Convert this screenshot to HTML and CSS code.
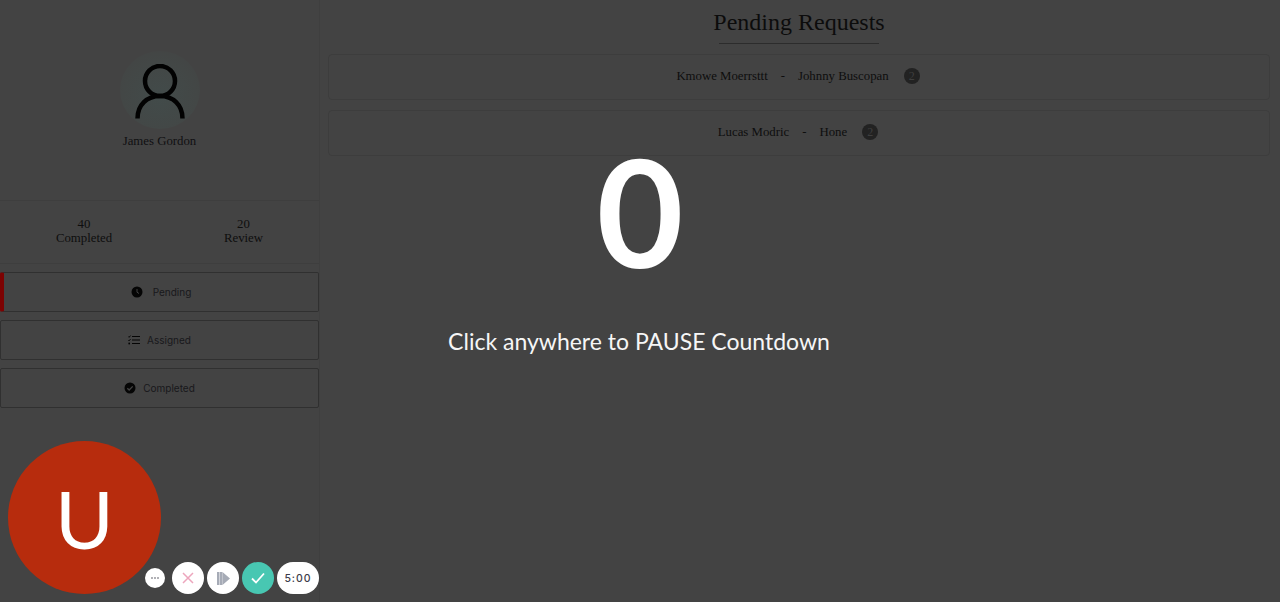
FILE: index.html
```html
<!DOCTYPE html>
<html lang="en">
<head>
<meta charset="utf-8">
<title>Pending Requests</title>
<link rel="stylesheet" href="styles.css">
</head>
<body>
<div class="app">
  <aside class="sidebar">
    <section class="profile">
      <div class="avatar">
        <svg class="avatar-icon" viewBox="0 0 50 56" width="50" height="56"><circle cx="25" cy="17" r="15" fill="none" stroke="#020202" stroke-width="4.5"/><path d="M2.500 54.500 C2.500 41 12 32 25 32 C38 32 47.500 41 47.500 54.500" fill="none" stroke="#020202" stroke-width="4.500"/></svg>
      </div>
      <div class="profile-name">James Gordon</div>
    </section>
    <section class="stats">
      <div class="stat"><span>40</span><span>Completed</span></div>
      <div class="stat"><span>20</span><span>Review</span></div>
    </section>
    <nav class="nav">
      <a class="nav-item active">
        <svg class="nav-icon" viewBox="0 0 12 12" width="12" height="12"><circle cx="6" cy="6" r="5.500" fill="#050505"/><path d="M6 3v3.200l2 1.300" fill="none" stroke="#434343" stroke-width="1"/></svg>
        <span class="nav-gap-pending">Pending</span>
      </a>
      <a class="nav-item">
        <svg class="nav-icon" viewBox="0 0 12 10" width="12" height="10"><path d="M4 1.500h8M4 5h8M4 8.500h8" stroke="#050505" stroke-width="1.100"/><path d="M.3 1.500l.8.800L2.500.6M.3 5l.8.800L2.500 4.100" stroke="#050505" fill="none"/><circle cx="1.200" cy="8.500" r=".9" fill="#050505"/></svg>
        <span class="nav-gap-assigned">Assigned</span>
      </a>
      <a class="nav-item">
        <svg class="nav-icon" viewBox="0 0 12 12" width="12" height="12"><circle cx="6" cy="6" r="5.500" fill="#050505"/><path d="M3.300 6.200l1.900 1.800 3.500-3.600" fill="none" stroke="#434343" stroke-width="1.300"/></svg>
        <span class="nav-gap-completed">Completed</span>
      </a>
    </nav>
  </aside>
  <main class="main">
    <h1 class="title">Pending Requests</h1>
    <div class="cards">
      <div class="card"><span>Kmowe Moerrsttt</span><span class="dash">-</span><span>Johnny Buscopan</span><span class="count">2</span></div>
      <div class="card"><span>Lucas Modric</span><span class="dash">-</span><span>Hone</span><span class="count">2</span></div>
    </div>
  </main>
</div>
<div class="countdown">
  <div class="count-num">0</div>
  <div class="count-hint">Click anywhere to PAUSE Countdown</div>
</div>
<div class="bubble">U</div>
<div class="controls">
  <button class="ctl ctl-more"><svg viewBox="0 0 10 2" width="10" height="2"><path d="M1 1h.01M4 1h.01M7 1h.01" stroke="#4a4a55" stroke-width="1.600" stroke-linecap="round" transform="translate(1)"/></svg></button>
  <button class="ctl ctl-round"><svg viewBox="0 0 12 12" width="12" height="12"><path d="M1 1l10 10M11 1L1 11" stroke="#eda6bd" stroke-width="1.500"/></svg></button>
  <button class="ctl ctl-round"><svg viewBox="0 0 13 13" width="13" height="13"><path d="M0 0h2.500v13H0zM3 0h2.200v13H3zM5.500 0L13 6.500 5.500 13z" fill="#a6abb6"/></svg></button>
  <button class="ctl ctl-round ctl-ok"><svg viewBox="0 0 14 12" width="14" height="12"><path d="M1 6.500L5 10.500 13 1.500" fill="none" stroke="#fff" stroke-width="1.800"/></svg></button>
  <button class="ctl ctl-time">5:00</button>
</div>
</body>
</html>
```
FILE: styles.css
```css
* { box-sizing: border-box; }
html, body { margin: 0; height: 100%; }
body {
  background: #434343;
  color: #0e0e0e;
  font-family: "Liberation Serif", serif;
  font-size: 12.800px;
  overflow: hidden;
  position: relative;
}
.app { display: flex; height: 602px; }
.sidebar {
  width: 320px;
  flex: none;
  border-right: 1px solid #3f3f3f;
}
.profile {
  height: 201px;
  border-bottom: 1px solid #3e3e3e;
  display: flex;
  flex-direction: column;
  align-items: center;
  padding-top: 51px;
}
.avatar {
  width: 80px;
  height: 78px;
  border-radius: 50%;
  background: radial-gradient(circle at 50% 60%, #424b4a 0%, #434746 60%, #434343 100%);
  display: flex;
  justify-content: center;
  padding-top: 13px;
}
.avatar-icon { display: block; }
.profile-name { margin-top: 4px; line-height: 16px; color: #101012; }
.stats {
  height: 63px;
  display: flex;
  border-bottom: 1px solid #3e3e3e;
  padding-top: 16px;
}
.stat {
  width: 50%;
  display: flex;
  flex-direction: column;
  align-items: center;
  line-height: 14px;
}
.stat:first-child { width: 168px; }
.stat:last-child { width: 151px; }
.nav { display: flex; flex-direction: column; gap: 8px; padding-top: 8px; }
.nav-item {
  width: 319px;
  height: 40px;
  border: 1px solid #303030;
  border-radius: 2px;
  display: flex;
  align-items: center;
  justify-content: center;
  font-family: Inter, "Liberation Sans", sans-serif;
  font-size: 10px;
  color: #18181b;
}
.nav-item.active { border-left: 4px solid #7d0202; }
.nav-icon { display: block; }
.nav-gap-pending { margin-left: 10px; }
.nav-gap-assigned { margin-left: 7px; }
.nav-gap-completed { margin-left: 7px; }
.main { flex: 1; min-width: 0; padding: 0 10px 0 8px; }
.title {
  margin: 0 auto;
  width: 160px;
  height: 44px;
  border-bottom: 1px solid #2c2c2c;
  font-size: 24px;
  font-weight: 400;
  line-height: 44px;
  white-space: nowrap;
  display: flex;
  justify-content: center;
  color: #0c0c0c;
}
.cards { display: flex; flex-direction: column; gap: 10px; margin-top: 10px; }
.card {
  height: 46px;
  border: 1px solid #3d3d3d;
  border-radius: 4px;
  display: flex;
  align-items: center;
  justify-content: center;
  line-height: 16px;
  padding: 0 2px 2px 0;
}
.dash { margin: 0 13px; }
.count {
  width: 16px;
  height: 16px;
  margin-left: 15px;
  border-radius: 50%;
  background: #222;
  color: #3e3e3e;
  font-size: 12px;
  text-align: center;
}
.countdown {
  position: absolute;
  left: 0;
  top: 127px;
  width: 100%;
  display: flex;
  flex-direction: column;
  align-items: center;
  color: #fff;
  font-family: Lato, sans-serif;
}
.count-num { font-size: 150px; line-height: 166px; font-weight: 700; }
.count-hint { margin-top: 34px; font-size: 23px; line-height: 28px; color: #f6f6f6; margin-right: 2px; }
.bubble {
  position: absolute;
  left: 8px;
  top: 441px;
  width: 153px;
  height: 153px;
  border-radius: 50%;
  background: #b72c0d;
  color: #fff;
  font-family: Lato, sans-serif;
  font-size: 80px;
  font-weight: 400;
  display: flex;
  align-items: center;
  justify-content: center;
}
.controls {
  position: absolute;
  left: 145px;
  top: 562px;
  display: flex;
  align-items: center;
  gap: 3px;
}
.ctl {
  border: 0;
  padding: 0;
  background: #fff;
  display: flex;
  align-items: center;
  justify-content: center;
}
.ctl-more { width: 20px; height: 20px; border-radius: 50%; margin-right: 4px; }
.ctl-round { width: 32px; height: 32px; border-radius: 50%; }
.ctl-ok { background: #48c7b2; }
.ctl-time {
  width: 42px;
  height: 32px;
  border-radius: 16px;
  font-family: Inter, sans-serif;
  font-size: 10.500px;
  font-weight: 500;
  letter-spacing: 1px;
  color: #3d3d4a;
}
```
